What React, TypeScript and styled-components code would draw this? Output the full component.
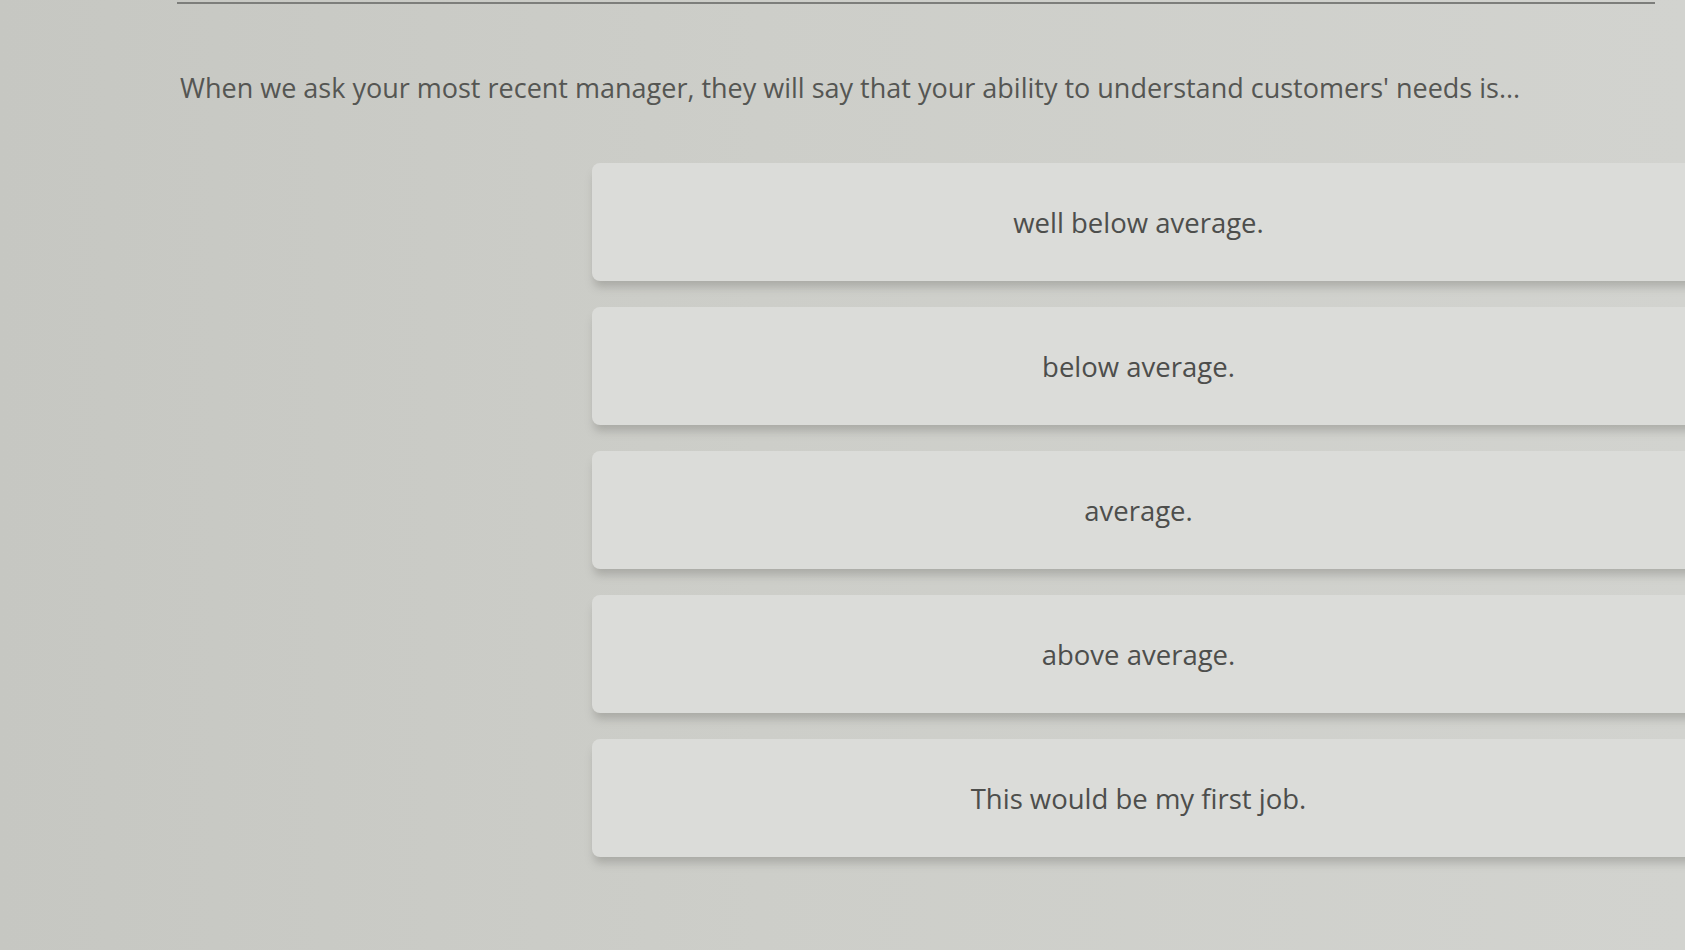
import styled, { createGlobalStyle } from 'styled-components';

const options = [
  'well below average.',
  'below average.',
  'average.',
  'above average.',
  'This would be my first job.',
];

const GlobalStyle = createGlobalStyle`
  html, body {
    margin: 0;
    padding: 0;
    background: #c9cac5;
    overflow: hidden;
  }
  * {
    box-sizing: border-box;
  }
`;

const Page = styled.main`
  width: 100vw;
  height: 100vh;
  background: linear-gradient(90deg, #c6c7c2 0%, #cdcec9 45%, #d2d3cf 100%);
  font-family: 'Open Sans', 'Noto Sans', sans-serif;
  color: #555654;
  overflow: hidden;
`;

const TopRule = styled.hr`
  margin: 0 30px 0 177px;
  height: 4px;
  border: none;
  border-bottom: 2px solid #7d7e7b;
`;

const Question = styled.h1`
  margin: 66px 0 0 180px;
  font-size: 27px;
  font-weight: 400;
  line-height: 36px;
  letter-spacing: 0;
  color: #555653;
`;

const OptionList = styled.ul`
  list-style: none;
  display: flex;
  flex-direction: column;
  gap: 26px;
  margin: 57px -12px 0 592px;
  padding: 0;
`;

const OptionCard = styled.li`
  display: flex;
  align-items: center;
  justify-content: center;
  height: 118px;
  padding-right: 12px;
  border-radius: 8px 0 0 8px;
  background: #dbdcd9;
  box-shadow: 0 8px 8px -2px rgba(120, 121, 116, 0.4);
  font-size: 27.5px;
  color: #4d4e4c;
  cursor: pointer;
`;

const App = () => {
  return (
    <>
      <GlobalStyle />
      <Page>
        <TopRule />
        <Question>
          When we ask your most recent manager, they will say that your ability to understand customers' needs is...
        </Question>
        <OptionList>
          {options.map((option) => (
            <OptionCard key={option}>{option}</OptionCard>
          ))}
        </OptionList>
      </Page>
    </>
  );
};

export default App;
